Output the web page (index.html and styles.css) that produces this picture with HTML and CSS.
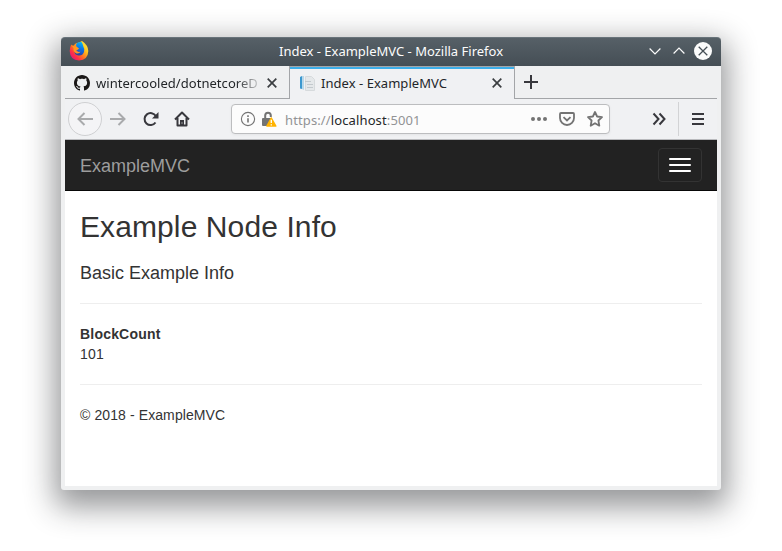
FILE: index.html
```html
<!DOCTYPE html>
<html lang="en">
<head>
<meta charset="utf-8">
<title>Index - ExampleMVC</title>
<link rel="stylesheet" href="styles.css">
</head>
<body>
<div class="window">
  <header class="titlebar">
    <svg class="firefox" width="20" height="20" viewBox="0 0 20 20">
      <defs>
        <linearGradient id="fire" x1="1" y1="0" x2="0.1" y2="0.9"><stop offset="0" stop-color="#fff44f"/><stop offset="0.35" stop-color="#ffc51e"/><stop offset="0.6" stop-color="#ff7322"/><stop offset="0.8" stop-color="#ff3145"/><stop offset="1" stop-color="#e5147c"/></linearGradient>
        <linearGradient id="globe" x1="0.6" y1="0" x2="0.4" y2="1"><stop offset="0" stop-color="#08b5f5"/><stop offset="0.5" stop-color="#0b70e5"/><stop offset="1" stop-color="#293fa5"/></linearGradient>
      </defs>
      <path fill="url(#fire)" d="M2.3 3.6Q3 5 4.500 4.500Q6 2 10 1.500L13 0Q19 4 19.300 10Q19 19 10 19.600Q1 19 .7 10Q.8 6 2.300 3.600Z"/>
      <path fill="url(#globe)" d="M8 2Q10 .9 12.500 1Q14 3 14.500 6Q16 8 15 11Q13.500 15 9.500 14.500Q5.500 14 5.300 10Q7 12 9.500 10.500L7 9.500L9.800 7.500Q7 6 7 4Z"/>
      <path fill="#ff9820" d="M2.300 4Q4 5.500 6.500 5Q7.500 6.500 9.900 7.200Q9.500 8.700 7.500 9Q6.500 10 8.500 10.900L11.500 10.800Q10.500 12.900 7.500 12.500Q4 11 4.500 7Z"/>
    </svg>
    <span class="title">Index - ExampleMVC - Mozilla Firefox</span>
    <div class="controls">
      <svg width="12" height="18" viewBox="0 0 12 18"><path class="glyph" d="M.6 6.500L6 12L11.400 6.500"/></svg>
      <svg width="12" height="18" viewBox="0 0 12 18"><path class="glyph" d="M.6 11.500L6 6L11.400 11.500"/></svg>
      <svg width="18" height="18" viewBox="0 0 18 18"><circle cx="9" cy="9" r="9" fill="#fcfcfc"/><path class="cross" d="M4.700 4.700L13.300 13.300M13.300 4.700L4.700 13.300"/></svg>
    </div>
  </header>
  <div class="tabs">
    <div class="tab">
      <svg width="16" height="16" viewBox="0 0 16 16"><path fill="#1b1817" d="M8 0C3.580 0 0 3.580 0 8c0 3.540 2.290 6.530 5.470 7.590.4.070.55-.17.55-.38 0-.19-.01-.82-.01-1.490-2.010.37-2.530-.49-2.690-.94-.09-.23-.48-.94-.82-1.130-.28-.15-.68-.52-.01-.53.630-.01 1.080.58 1.230.82.720 1.210 1.870.87 2.330.66.070-.52.280-.87.510-1.070-1.780-.2-3.640-.89-3.640-3.950 0-.87.310-1.590.82-2.150-.08-.2-.36-1.020.08-2.120 0 0 .67-.21 2.200.82.640-.18 1.320-.27 2-.27s1.360.09 2 .27c1.530-1.040 2.200-.82 2.200-.82.440 1.100.16 1.920.08 2.120.51.560.82 1.270.82 2.150 0 3.070-1.870 3.750-3.650 3.950.29.250.54.730.54 1.480 0 1.070-.01 1.930-.01 2.200 0 .21.150.46.550.38A8.010 8.010 0 0 0 16 8c0-4.420-3.580-8-8-8Z"/></svg>
      <span class="label faded">wintercooled/dotnetcoreD</span>
      <svg class="close" width="10" height="10" viewBox="0 0 10 10"><path d="M.7.700L9.300 9.300M9.300.700L.7 9.300"/></svg>
    </div>
    <div class="tab active">
      <svg width="16" height="16" viewBox="0 0 16 16"><path fill="#3c98cf" d="M1 2L3 1V14L1 13.500Z"/><path fill="#b7d7e9" d="M3 1H5V15L3 14Z"/><path fill="#e5e8ea" stroke="#d6dadc" d="M6.500 1.500H12.500L15.500 4.500V15.500H6.500Z"/><path stroke="#c3c9cd" d="M6 6.500H12M8 9.500H14M8 12.500H14"/></svg>
      <span class="label">Index - ExampleMVC</span>
      <svg class="close" width="10" height="10" viewBox="0 0 10 10"><path d="M.7.700L9.300 9.300M9.300.700L.7 9.300"/></svg>
    </div>
    <div class="newtab"><svg width="14" height="14" viewBox="0 0 14 14"><path d="M7 0V14M0 7H14"/></svg></div>
  </div>
  <div class="toolbar">
    <span class="back"><svg class="dim" width="16" height="14" viewBox="0 0 16 14"><path d="M16 7H1.500M7.500 1L1.500 7L7.500 13"/></svg></span>
    <svg class="dim forward" width="16" height="14" viewBox="0 0 16 14"><path d="M0 7H14.500M8.500 1L14.500 7L8.500 13"/></svg>
    <svg class="reload" width="16" height="16" viewBox="0 0 16 16"><path class="line" d="M12.500 11.500A6 6 0 1 1 12.800 5.100"/><path fill="#38383d" d="M15.500 1V7.500H9Z"/></svg>
    <svg class="home" width="16" height="16" viewBox="0 0 16 16"><path class="line" stroke-linejoin="round" d="M1 8.500L8 1.500L15 8.500M3.500 7V14.500H12.500V7"/><path fill="#38383d" d="M6 9H10V15H6Z"/><path fill="#f0f1f3" d="M7.500 11.500H8.500V12.500H7.500Z"/></svg>
    <div class="urlbar">
      <svg width="16" height="16" viewBox="0 0 16 16"><circle class="thin" cx="8" cy="8" r="6.600"/><path class="info" d="M8 7.200V11.500M8 4.300V5.900"/></svg>
      <svg class="lock" width="16" height="16" viewBox="0 0 16 16"><path fill="none" stroke="#737373" stroke-width="2" d="M4.200 8V4.500A2.800 2.800 0 0 1 9.800 4.500V6"/><rect x="1" y="7" width="10" height="8" rx="1" fill="#737373"/><path fill="#ffb300" stroke="#ffb300" stroke-width="1.500" stroke-linejoin="round" d="M10.300 7L14.800 15H5.900Z"/><path stroke="#fff" stroke-width="1.300" d="M10.300 8.700V12M10.300 13.200V14.400"/></svg>
      <span class="url">https://<b>localhost</b>:5001</span>
      <svg class="dots" width="16" height="16" viewBox="0 0 16 16"><g fill="#737373"><circle cx="2" cy="8" r="2"/><circle cx="8" cy="8" r="2"/><circle cx="14" cy="8" r="2"/></g></svg>
      <svg class="pocket" width="16" height="16" viewBox="0 0 16 16"><path class="gray" d="M2 2H14Q15 2 15 3V7A7 7 0 0 1 1 7V3Q1 2 2 2ZM4.500 6.200L8 9.500L11.500 6.200"/></svg>
      <svg width="16" height="16" viewBox="0 0 16 16"><path class="gray" stroke-linejoin="round" d="M8 1L10.100 5.500L15 6.100L11.400 9.500L12.300 14.700L8 12.200L3.700 14.700L4.600 9.500L1 6.100L5.900 5.500Z"/></svg>
    </div>
    <svg class="more" width="14" height="14" viewBox="0 0 14 14"><path class="line" d="M1.500 1.500L6.500 7L1.500 12.500M7.500 1.500L12.500 7L7.500 12.500"/></svg>
    <i class="divider"></i>
    <svg width="12" height="12" viewBox="0 0 12 12"><path class="line" d="M0 1H12M0 6H12M0 11H12"/></svg>
  </div>
  <div class="page">
    <nav class="navbar">
      <span class="brand">ExampleMVC</span>
      <button class="toggle" aria-label="Toggle navigation"><i></i><i></i><i></i></button>
    </nav>
    <main class="content">
      <h2>Example Node Info</h2>
      <h4>Basic Example Info</h4>
      <hr>
      <dl><dt>BlockCount</dt><dd>101</dd></dl>
      <hr>
      <footer>© 2018 - ExampleMVC</footer>
    </main>
  </div>
</div>
</body>
</html>
```
FILE: styles.css
```css
* { box-sizing: border-box; }
body { margin: 0; padding: 37px 0 0 61px; height: 551px; background: #fff; overflow: hidden; font-family: "Noto Sans", sans-serif; font-size: 13px; }
svg { display: block; flex: none; fill: none; }
.window { width: 660px; height: 453px; background: #eff0f1; border-radius: 4px 4px 3px 3px; box-shadow: 0 11px 30px 6px rgba(35, 38, 41, .48); display: flex; flex-direction: column; }
.titlebar { height: 29px; flex: none; display: flex; align-items: center; padding: 0 9px 0 8px; border-radius: 4px 4px 0 0; background: linear-gradient(#566067, #454e55); border-top: 1px solid #68737a; color: #fcfcfc; }
.title { flex: 1; text-align: center; padding: 0 0 2px 44px; line-height: 18px; }
.controls { display: flex; gap: 12px; align-items: center; padding-bottom: 2px; }
.controls svg:last-child { margin-left: -3px; }
.firefox { margin-bottom: 2px; }
.glyph { stroke: #fcfcfc; stroke-width: 1.2; }
.cross { stroke: #475057; stroke-width: 1.3; }
.tabs { height: 33px; flex: none; margin: 0 4px; display: flex; color: #232629; }
.tab { width: 224px; display: flex; align-items: center; padding: 2px 12px 0 9px; border-bottom: 1px solid #a3a5a8; }
.tab.active { width: 226px; border: solid #a3a5a8; border-width: 1px 1px 0; background: #f0f1f3; box-shadow: inset 0 2px #3daee9; padding: 0 12px 0 9px; }
.label { flex: 1; min-width: 0; margin: 0 4px 0 6px; white-space: nowrap; line-height: 20px; letter-spacing: .04px; }
.faded { -webkit-mask-image: linear-gradient(90deg, #000 84%, transparent); mask-image: linear-gradient(90deg, #000 84%, transparent); }
.close { stroke: #3b3e41; stroke-width: 1.7; }
.newtab { flex: 1; border-bottom: 1px solid #a3a5a8; padding: 9px 0 0 9px; }
.newtab svg { stroke: #38383d; stroke-width: 2; }
.toolbar { height: 41px; flex: none; margin: 0 4px; padding: 0 13px 0 3px; display: flex; align-items: center; background: #f0f1f3; border-bottom: 1px solid #b9babd; }
.back { width: 34px; height: 34px; border: 1px solid #cfd0d2; border-radius: 50%; background: #f4f4f6; display: grid; place-items: center; }
.dim { stroke: #a9aaac; stroke-width: 2; }
.forward { margin-left: 8px; }
.line { stroke: #38383d; stroke-width: 2; }
.reload { margin-left: 17px; }
.home { margin-left: 15px; }
.urlbar { width: 379px; height: 30px; margin-left: 41px; padding: 0 6px 0 8px; display: flex; align-items: center; border: 1px solid #bcbdbf; border-radius: 4px; background: #fcfcfc; box-shadow: 0 1px 3px rgba(0, 0, 0, .05); }
.thin { stroke: #737373; stroke-width: 1.1; }
.info { stroke: #737373; stroke-width: 1.6; }
.lock { margin-left: 5px; }
.url { flex: 1; margin-left: 8px; padding-top: 2px; color: #929395; line-height: 20px; letter-spacing: .12px; }
.url b { color: #232629; font-weight: 400; }
.pocket { margin: 0 12px; }
.gray { stroke: #737373; stroke-width: 1.8; }
.more { margin-left: 42px; }
.divider { width: 1px; height: 34px; margin: 0 13px 0 12px; background: #d2d3d5; }
.page { flex: 1; margin: 0 4px 4px; background: #fff; font: 14px/20px "Liberation Sans", Arial, sans-serif; color: #333; }
.navbar { height: 51px; padding: 0 15px; display: flex; align-items: center; justify-content: space-between; background: #222; border-bottom: 1px solid #080808; }
.brand { font-size: 18px; color: #9d9d9d; padding-top: 2px; }
.toggle { width: 44px; height: 34px; padding: 0 10px; border: 1px solid #333; border-radius: 4px; background: none; display: flex; flex-direction: column; justify-content: center; gap: 4px; }
.toggle i { width: 22px; height: 2px; border-radius: 1px; background: #fff; }
.content { padding: 19px 15px 0; }
h2, h4 { font-weight: 500; margin: 0; }
h2 { font-size: 30px; line-height: 33px; letter-spacing: .1px; }
h4 { font-size: 18px; line-height: 20px; padding-top: 20px; }
hr { margin: 20px 0; border: 0; border-top: 1px solid #eee; }
dl, dd { margin: 0; }
dt { font-weight: 700; letter-spacing: .2px; }
dd { letter-spacing: .2px; }
footer { letter-spacing: .1px; }
```
